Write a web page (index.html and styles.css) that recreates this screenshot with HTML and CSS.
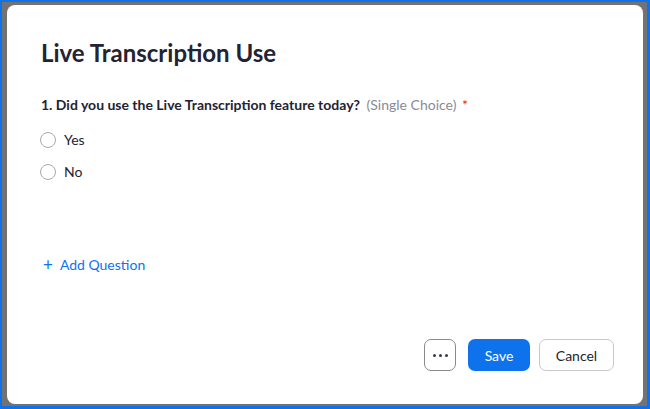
FILE: index.html
```html
<!DOCTYPE html>
<html>
<head>
<meta charset="utf-8">
<link rel="stylesheet" href="styles.css">
</head>
<body>
<div class="frame">
  <div class="overlay">
    <div class="dialog">
      <h1 class="title">Live Transcription Use</h1>
      <div class="question">
        <span class="q-text">1. Did you use the Live Transcription feature today?</span>
        <span class="q-type">(Single Choice)</span>
        <span class="req">*</span>
      </div>
      <div class="options">
        <label class="option"><span class="radio"></span><span>Yes</span></label>
        <label class="option"><span class="radio"></span><span>No</span></label>
      </div>
      <div class="add"><span class="plus">+</span>Add Question</div>
      <div class="actions">
        <button class="btn more"><span class="dot"></span><span class="dot"></span><span class="dot"></span></button>
        <button class="btn save">Save</button>
        <button class="btn cancel">Cancel</button>
      </div>
    </div>
  </div>
</div>
</body>
</html>
```
FILE: styles.css
```css
* { box-sizing: border-box; }
html, body { margin: 0; padding: 0; }
body {
  width: 650px;
  height: 409px;
  overflow: hidden;
  background: #0e72ed;
  font-family: Lato, "Open Sans", sans-serif;
}
.frame {
  width: 650px;
  height: 409px;
  padding: 2px 3px 3px 2px;
}
.overlay {
  width: 100%;
  height: 100%;
  background: #737373;
  padding: 3px 4px 2px 5px;
}
.dialog {
  width: 100%;
  height: 100%;
  background: #fff;
  border-radius: 8px;
  padding: 0 29px 0 34px;
  display: flex;
  flex-direction: column;
}
.title {
  margin: 32px 0 0 0;
  font-size: 24px;
  font-weight: 700;
  color: #232333;
  line-height: 32px;
}
.question {
  margin-top: 26px;
  font-size: 14px;
  line-height: 20px;
  color: #232333;
}
.q-text { font-weight: 700; }
.q-type { color: #8a8a96; font-size: 14px; margin-left: 3px; }
.req { color: #e02828; margin-left: 2px; }
.options {
  margin-top: 15px;
  display: flex;
  flex-direction: column;
  gap: 12px;
}
.option {
  display: flex;
  align-items: center;
  gap: 8px;
  font-size: 14px;
  line-height: 20px;
  color: #232333;
}
.radio {
  width: 16px;
  height: 16px;
  border: 1px solid #a8a8b0;
  border-radius: 50%;
  margin-left: -1px;
}
.add {
  margin-top: 73px;
  font-size: 14px;
  line-height: 20px;
  color: #0e72ed;
  display: flex;
  align-items: center;
}
.plus { font-size: 17px; margin: 0 7px 0 2px; line-height: 20px; }
.actions {
  margin-top: auto;
  margin-bottom: 33px;
  display: flex;
  justify-content: flex-end;
  gap: 9px;
}
.btn {
  height: 32px;
  border-radius: 7px;
  font-family: Lato, "Open Sans", sans-serif;
  font-size: 14px;
  padding: 0;
  cursor: pointer;
}
.more {
  width: 32px;
  border: 1px solid #8a8a8a;
  background: #fff;
  margin-right: 3px;
  display: flex;
  align-items: center;
  justify-content: center;
  gap: 3px;
}
.dot {
  width: 3px;
  height: 3px;
  border-radius: 50%;
  background: #39394d;
}
.save {
  width: 62px;
  border: none;
  background: #0e72ed;
  color: #fff;
}
.cancel {
  width: 75px;
  border: 1px solid #c8c8cc;
  background: #fff;
  color: #232333;
}
```
